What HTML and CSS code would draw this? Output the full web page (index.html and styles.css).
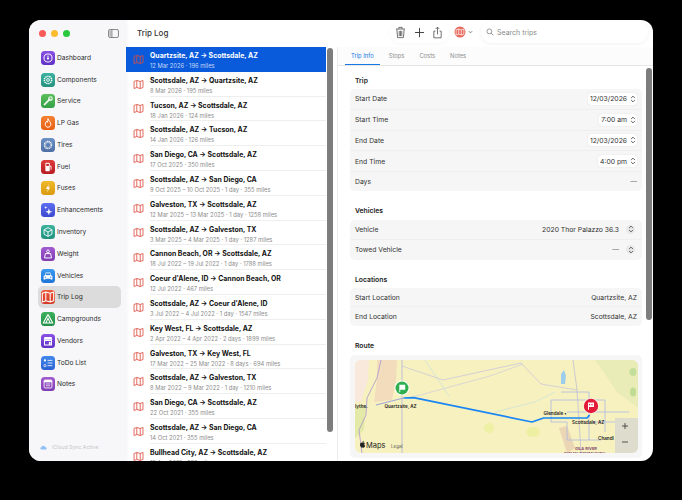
FILE: index.html
```html
<!DOCTYPE html>
<html lang="en">
<head>
    <meta charset="UTF-8">
    <title>Trip Log</title>
    <link rel="stylesheet" href="styles.css">
</head>
<body>
    <svg class="sprites" width="0" height="0">
        <symbol id="map" viewBox="0 0 16 16">
            <path d="M1.5 3.6 5.5 2.2 10.5 3.6 14.5 2.2V12.4L10.5 13.8 5.5 12.4 1.5 13.8Z M5.5 2.2V12.4 M10.5 3.6V13.8" fill="none" stroke="currentColor" stroke-width="1.2" stroke-linejoin="round"/>
        </symbol>
        <symbol id="updown" viewBox="0 0 8 12">
            <path d="M1.5 4.2 4 1.7 6.5 4.2 M1.5 7.8 4 10.3 6.5 7.8" fill="none" stroke="currentColor" stroke-width="1.1" stroke-linecap="round" stroke-linejoin="round"/>
        </symbol>
    </svg>

    <div class="window">
        <!-- sidebar -->
        <div class="sidebar">
            <div class="lights">
                <span class="light red"></span>
                <span class="light yellow"></span>
                <span class="light green"></span>
                <svg class="panel-icon" viewBox="0 0 12 10"><rect x="0.5" y="0.5" width="11" height="9" rx="1.8" fill="none" stroke="#555" stroke-width="0.8"/><path d="M4.2 0.5V9.5" stroke="#555" stroke-width="0.8"/><rect x="1.3" y="1.5" width="2" height="7" fill="#bbb"/></svg>
            </div>
            <ul class="nav">
                <li><span class="tile t-purple"><svg viewBox="0 0 16 16"><circle cx="8" cy="8" r="4.6" fill="none" stroke="#fff" stroke-width="1.1"/><circle cx="8" cy="8.6" r="1.3" fill="#fff"/><path d="M8 8V5.2" stroke="#fff"/></svg></span>Dashboard</li>
                <li><span class="tile t-teal"><svg viewBox="0 0 16 16"><circle cx="8" cy="8" r="4.2" fill="none" stroke="#fff" stroke-width="1.6" stroke-dasharray="1.6 0.7"/><circle cx="8" cy="8" r="1.6" fill="none" stroke="#fff"/></svg></span>Components</li>
                <li><span class="tile t-green"><svg viewBox="0 0 16 16"><path d="M4 12 10 6" stroke="#fff" stroke-width="2" stroke-linecap="round"/><circle cx="10.8" cy="5.2" r="2" fill="none" stroke="#fff" stroke-width="1.2"/></svg></span>Service</li>
                <li><span class="tile t-orange"><svg viewBox="0 0 16 16"><path d="M8 3C8.5 5.5 11.2 6.8 11.2 9.6 11.2 11.6 9.8 12.8 8 12.8S4.8 11.6 4.8 9.6C4.8 8 5.8 7 6.4 6 6.8 6.6 7 7 7.2 7.2 7.8 6 8 4.5 8 3Z" fill="none" stroke="#fff" stroke-width="1.1"/></svg></span>LP Gas</li>
                <li><span class="tile t-slate"><svg viewBox="0 0 16 16"><circle cx="8" cy="8" r="4.2" fill="none" stroke="#fff" stroke-width="1.2" stroke-dasharray="1.4 0.6"/><circle cx="8" cy="8" r="3" fill="none" stroke="#fff" stroke-width="0.5"/></svg></span>Tires</li>
                <li><span class="tile t-red"><svg viewBox="0 0 16 16"><rect x="5" y="3.2" width="5" height="9.6" rx="0.8" fill="#fff"/><rect x="6" y="4.4" width="3" height="2.4" fill="#c8262b"/><path d="M10 7H11.5V11" fill="none" stroke="#fff"/></svg></span>Fuel</li>
                <li><span class="tile t-yellow"><svg viewBox="0 0 16 16"><path d="M9.5 3 5.5 9H8L6.5 13 10.5 7H8Z" fill="#fff"/></svg></span>Fuses</li>
                <li><span class="tile t-indigo"><svg viewBox="0 0 16 16"><path d="M9 6 10 9 13 10 10 11 9 14 8 11 5 10 8 9Z" fill="#fff"/><path d="M5.5 3 6 4.5 7.5 5 6 5.5 5.5 7 5 5.5 3.5 5 5 4.5Z" fill="#fff"/></svg></span>Enhancements</li>
                <li><span class="tile t-teal"><svg viewBox="0 0 16 16"><path d="M8 3 12.5 5.5V10.5L8 13 3.5 10.5V5.5Z M3.5 5.5 8 8 12.5 5.5 M8 8V13" fill="none" stroke="#fff" stroke-width="1"/></svg></span>Inventory</li>
                <li><span class="tile t-violet"><svg viewBox="0 0 16 16"><path d="M4 12.5H12L11 7.5H5Z" fill="none" stroke="#fff" stroke-width="1.1"/><circle cx="8" cy="5" r="1.6" fill="none" stroke="#fff"/></svg></span>Weight</li>
                <li><span class="tile t-blue"><svg viewBox="0 0 16 16"><path d="M4.5 7 5.5 4H10.5L11.5 7 13 8V12H11V11H5V12H3V8Z" fill="#fff"/><rect x="5.6" y="5" width="4.8" height="2" fill="#2a83e0"/><circle cx="5" cy="9.3" r="0.8" fill="#2a83e0"/><circle cx="11" cy="9.3" r="0.8" fill="#2a83e0"/></svg></span>Vehicles</li>
                <li class="active"><span class="tile t-tomato"><svg viewBox="0 0 16 16"><use href="#map" color="#fff"/></svg></span>Trip Log</li>
                <li><span class="tile t-forest"><svg viewBox="0 0 16 16"><path d="M8 3 13.5 12.5H2.5Z M8 7 10.5 12.5H5.5Z" fill="none" stroke="#fff" stroke-width="1.2" stroke-linejoin="round"/></svg></span>Campgrounds</li>
                <li><span class="tile t-purple"><svg viewBox="0 0 16 16"><path d="M4 3.5H12L13 6.5H3Z" fill="#fff"/><path d="M4 7.5H12V12.5H4Z" fill="none" stroke="#fff" stroke-width="1.2"/><rect x="9" y="9" width="2" height="3.5" fill="#fff"/></svg></span>Vendors</li>
                <li><span class="tile t-azure"><svg viewBox="0 0 16 16"><circle cx="4.5" cy="5" r="1.3" fill="#fff"/><circle cx="4.5" cy="11" r="1.3" fill="none" stroke="#fff" stroke-width="0.8"/><path d="M7.5 5H13 M7.5 11H13 M7.5 8H13" stroke="#fff" stroke-width="0.9"/></svg></span>ToDo List</li>
                <li><span class="tile t-violet"><svg viewBox="0 0 16 16"><rect x="3.5" y="3.5" width="9" height="9" rx="1.2" fill="none" stroke="#fff"/><rect x="3.5" y="3.5" width="9" height="2.6" fill="#fff"/><path d="M5.5 8H10.5 M5.5 10H10.5" stroke="#fff" stroke-width="0.8"/></svg></span>Notes</li>
            </ul>
            <div class="sync">
                <svg viewBox="0 0 16 10"><path d="M4 9.5C2 9.5 0.8 8.2 0.8 6.7 0.8 5.2 2 4.2 3.4 4.2 4 2 5.8 0.8 7.8 0.8 10.2 0.8 12 2.6 12.2 4.6 14 4.6 15.2 5.6 15.2 7 15.2 8.5 14 9.5 12.5 9.5Z" fill="#8fc1f5"/></svg>
                <span>iCloud Sync Active</span>
            </div>
        </div>

        <!-- trip list -->
        <div class="list-col">
            <div class="list-head">Trip Log</div>
            <div class="trips">
                <a class="trip selected"><svg class="trip-icon"><use href="#map"/></svg><div class="bd"><p class="label">Quartzsite, AZ → Scottsdale, AZ</p><p class="sub">12 Mar 2026 · 196 miles</p></div></a>
                <a class="trip"><svg class="trip-icon"><use href="#map"/></svg><div class="bd"><p class="label">Scottsdale, AZ → Quartzsite, AZ</p><p class="sub">8 Mar 2026 · 195 miles</p></div></a>
                <a class="trip"><svg class="trip-icon"><use href="#map"/></svg><div class="bd"><p class="label">Tucson, AZ → Scottsdale, AZ</p><p class="sub">18 Jan 2026 · 124 miles</p></div></a>
                <a class="trip"><svg class="trip-icon"><use href="#map"/></svg><div class="bd"><p class="label">Scottsdale, AZ → Tucson, AZ</p><p class="sub">14 Jan 2026 · 126 miles</p></div></a>
                <a class="trip"><svg class="trip-icon"><use href="#map"/></svg><div class="bd"><p class="label">San Diego, CA → Scottsdale, AZ</p><p class="sub">17 Oct 2025 · 350 miles</p></div></a>
                <a class="trip"><svg class="trip-icon"><use href="#map"/></svg><div class="bd"><p class="label">Scottsdale, AZ → San Diego, CA</p><p class="sub">9 Oct 2025 – 10 Oct 2025 · 1 day · 355 miles</p></div></a>
                <a class="trip"><svg class="trip-icon"><use href="#map"/></svg><div class="bd"><p class="label">Galveston, TX → Scottsdale, AZ</p><p class="sub">12 Mar 2025 – 13 Mar 2025 · 1 day · 1258 miles</p></div></a>
                <a class="trip"><svg class="trip-icon"><use href="#map"/></svg><div class="bd"><p class="label">Scottsdale, AZ → Galveston, TX</p><p class="sub">3 Mar 2025 – 4 Mar 2025 · 1 day · 1287 miles</p></div></a>
                <a class="trip"><svg class="trip-icon"><use href="#map"/></svg><div class="bd"><p class="label">Cannon Beach, OR → Scottsdale, AZ</p><p class="sub">18 Jul 2022 – 19 Jul 2022 · 1 day · 1788 miles</p></div></a>
                <a class="trip"><svg class="trip-icon"><use href="#map"/></svg><div class="bd"><p class="label">Coeur d'Alene, ID → Cannon Beach, OR</p><p class="sub">12 Jul 2022 · 467 miles</p></div></a>
                <a class="trip"><svg class="trip-icon"><use href="#map"/></svg><div class="bd"><p class="label">Scottsdale, AZ → Coeur d'Alene, ID</p><p class="sub">3 Jul 2022 – 4 Jul 2022 · 1 day · 1547 miles</p></div></a>
                <a class="trip"><svg class="trip-icon"><use href="#map"/></svg><div class="bd"><p class="label">Key West, FL → Scottsdale, AZ</p><p class="sub">2 Apr 2022 – 4 Apr 2022 · 2 days · 1899 miles</p></div></a>
                <a class="trip"><svg class="trip-icon"><use href="#map"/></svg><div class="bd"><p class="label">Galveston, TX → Key West, FL</p><p class="sub">17 Mar 2022 – 25 Mar 2022 · 8 days · 694 miles</p></div></a>
                <a class="trip"><svg class="trip-icon"><use href="#map"/></svg><div class="bd"><p class="label">Scottsdale, AZ → Galveston, TX</p><p class="sub">8 Mar 2022 – 9 Mar 2022 · 1 day · 1210 miles</p></div></a>
                <a class="trip"><svg class="trip-icon"><use href="#map"/></svg><div class="bd"><p class="label">San Diego, CA → Scottsdale, AZ</p><p class="sub">22 Oct 2021 · 355 miles</p></div></a>
                <a class="trip"><svg class="trip-icon"><use href="#map"/></svg><div class="bd"><p class="label">Scottsdale, AZ → San Diego, CA</p><p class="sub">14 Oct 2021 · 355 miles</p></div></a>
                <a class="trip"><svg class="trip-icon"><use href="#map"/></svg><div class="bd"><p class="label">Bullhead City, AZ → Scottsdale, AZ</p><p class="sub">15 Apr 2021 · 322 miles</p></div></a>
            </div>
            <div class="scrollbar list-thumb"></div>
        </div>

        <!-- detail -->
        <div class="detail-col">
            <div class="toolbar">
                <div class="tool-group">
                    <svg viewBox="0 0 12 14"><path d="M2 3.5 2.8 12.6H9.2L10 3.5 M1 3.2H11 M4.2 3V1.4H7.8V3 M4.6 5.2V11 M6 5.2V11 M7.4 5.2V11" fill="none" stroke="#555" stroke-width="0.9"/></svg>
                    <svg viewBox="0 0 12 14"><path d="M6 2.5V11.5 M1.5 7H10.5" stroke="#444" stroke-width="1.1" stroke-linecap="round"/></svg>
                    <svg viewBox="0 0 12 14"><path d="M3.8 5.5H2V12.8H10V5.5H8.2 M6 9V1.2 M4 3.2 6 1.2 8 3.2" fill="none" stroke="#555" stroke-width="0.9"/></svg>
                </div>
                <div class="tool-menu">
                    <svg class="menu-icon" viewBox="0 0 14 14"><circle cx="7" cy="7" r="6.4" fill="#e8685c"/><path d="M2.5 4.5 5.5 3.5 8.5 4.5 11.5 3.5V9.5L8.5 10.5 5.5 9.5 2.5 10.5Z M5.5 3.5V9.5 M8.5 4.5V10.5" fill="none" stroke="#fff" stroke-width="0.8"/></svg>
                    <svg class="menu-chevron" viewBox="0 0 6 4"><path d="M1 1 3 3 5 1" fill="none" stroke="#555" stroke-width="0.9"/></svg>
                </div>
                <div class="search">
                    <svg viewBox="0 0 10 10"><circle cx="4.2" cy="4.2" r="3" fill="none" stroke="#777" stroke-width="0.9"/><path d="M6.5 6.5 9 9" stroke="#777" stroke-width="1"/></svg>
                    <span>Search trips</span>
                </div>
            </div>
            <div class="tabs">
                <span class="tab current">Trip Info</span>
                <span class="tab">Stops</span>
                <span class="tab">Costs</span>
                <span class="tab">Notes</span>
            </div>
            <div class="detail">
                <h3>Trip</h3>
                <div class="card">
                    <div class="row"><span>Start Date</span><span class="picker">12/03/2026<svg><use href="#updown"/></svg></span></div>
                    <div class="row"><span>Start Time</span><span class="picker">7:00 am<svg><use href="#updown"/></svg></span></div>
                    <div class="row"><span>End Date</span><span class="picker">12/03/2026<svg><use href="#updown"/></svg></span></div>
                    <div class="row"><span>End Time</span><span class="picker">4:00 pm<svg><use href="#updown"/></svg></span></div>
                    <div class="row days"><span>Days</span><span class="muted">—</span></div>
                </div>
                <h3>Vehicles</h3>
                <div class="card">
                    <div class="row vehicle"><span>Vehicle</span><span class="select">2020 Thor Palazzo 36.3<i class="knob"><svg><use href="#updown"/></svg></i></span></div>
                    <div class="row vehicle"><span>Towed Vehicle</span><span class="select muted">—<i class="knob"><svg><use href="#updown"/></svg></i></span></div>
                </div>
                <h3>Locations</h3>
                <div class="card">
                    <div class="row short"><span>Start Location</span><span>Quartzsite, AZ</span></div>
                    <div class="row short"><span>End Location</span><span>Scottsdale, AZ</span></div>
                </div>
                <h3>Route</h3>
                <div class="card route-card">
                    <svg class="map" viewBox="0 0 283 93">
                        <rect width="283" height="93" fill="#f7f0bf"/>
                        <path d="M22 0H42L41 20 37 40 19 42 22 20Z" fill="#f2dcbc"/>
                        <path d="M0 0H14L13 20 6 42H0Z" fill="#f9e8dc"/>
                        <path d="M0 46H11L9 70 0 78Z" fill="#e3e9a6"/>
                        <path d="M240 0H283V48L262 32 250 14Z" fill="#eaecb8"/>
                        <ellipse cx="278" cy="12" rx="3.5" ry="4" fill="#c4de9c"/>
                        <ellipse cx="278" cy="32" rx="3" ry="4.5" fill="#bfdb94"/>
                        <ellipse cx="134" cy="68" rx="5" ry="5" fill="#eef0a4"/>
                        <ellipse cx="178" cy="72" rx="7" ry="5" fill="#edf0a2"/>
                        <path d="M204 68 212 66 220 88 212 93Z" fill="#ead6b4"/>
                        <path d="M206 14 209 10 211 16 210 24 206 24Z" fill="#9ccdeb"/>
                        <path d="M26 0 22 18 12 38 11 55 4 70 7 93" fill="none" stroke="#a995d2" stroke-width="0.8"/>
                        <path d="M47 0V93" stroke="#c7c8d4" stroke-width="1.2"/>
                        <path d="M47 6 88 20 166 3 186 24 222 30" fill="none" stroke="#c4c3de" stroke-width="0.7"/>
                        <path d="M58 37 135 16 168 4" fill="none" stroke="#c8c7e0" stroke-width="0.6"/>
                        <path d="M70 0 94 36 M140 52 180 42 200 32" fill="none" stroke="#bfe0e2" stroke-width="0.6"/>
                        <path d="M218 0 222 30 226 93" fill="none" stroke="#b9b9d8" stroke-width="0.7"/>
                        <path d="M196 40 V62 H212 V80 H246 M196 40 H250 V72 M206 32 H234 V80 M212 52 H274 M238 62 H262" fill="none" stroke="#adb8e4" stroke-width="0.8"/>
                        <path d="M21 45 48.6 38" fill="none" stroke="#a0a9d8" stroke-width="1.1"/>
                        <path d="M48.6 38 58.6 37.7 177 62 188.6 58 232 58 234.6 55" fill="none" stroke="#1a86f4" stroke-width="1.7" stroke-linejoin="round"/>
                        <circle cx="47" cy="28" r="7.6" fill="#fff" fill-opacity="0.9"/>
                        <circle cx="47" cy="28" r="6.5" fill="#2eb050"/>
                        <path d="M44.3 24.8H50.2V29.8H45.2V32.2H44.3Z" fill="#fff"/>
                        <circle cx="236" cy="46" r="8" fill="#fff" fill-opacity="0.6"/>
                        <circle cx="236" cy="46" r="7.2" fill="#e31b39"/>
                        <path d="M233 42.5H239V47H234V49.8H233Z" fill="#fff"/>
                        <path d="M234 44H235.2V45.2H234Z M236.4 44H237.6V45.2H236.4Z" fill="#e31b39"/>
                        <text class="map-label" x="0" y="48">lythe.</text>
                        <text class="map-label" x="29.5" y="48">Quartzsite, AZ</text>
                        <text class="map-label" x="188.5" y="55">Glendale •</text>
                        <text class="map-label" x="217" y="64">Scottsdale, AZ</text>
                        <text class="map-label" x="243" y="80">Chandl</text>
                        <path d="M7.5 82.6C8.2 82.2 9.6 82.5 10 83.2 9 83.8 9.1 85.3 10.2 85.7 9.9 86.6 9.2 87.8 8.4 87.7 7.9 87.6 7.5 87.4 7.1 87.7 6.2 88 5 86.2 5 84.8 5 83 6.4 82.1 7.5 82.6Z M7.5 82.2C7.5 81.4 8.1 80.8 8.8 80.7 8.9 81.5 8.3 82.2 7.5 82.2Z" fill="#222"/>
                        <text class="map-maps" x="11" y="88">Maps</text>
                        <text class="map-legal" x="36" y="88">Legal</text>
                        <text class="map-reserve" x="220" y="89.5">GILA RIVER</text>
                        <text class="map-reserve" x="209" y="94.5">INDIAN COMMUNITY</text>
                        <rect x="260" y="58" width="23" height="35" fill="#d9d9cf" fill-opacity="0.85"/>
                        <path d="M267 66H273 M270 63V69 M267 82H273" stroke="#444" stroke-width="0.9"/>
                    </svg>
                </div>
            </div>
            <div class="scrollbar detail-thumb"></div>
        </div>
    </div>
</body>
</html>
```

FILE: styles.css
```css
* {
    padding: 0;
    margin: 0;
    box-sizing: border-box;
}
body {
    background: #000;
    padding: 20px 0 0 29px;
    font-family: "Inter", "Liberation Sans", sans-serif;
    color: #222;
    overflow: hidden;
}
.sprites {
    position: absolute;
}
.window {
    width: 624px;
    height: 441px;
    background: #fff;
    border-radius: 12px;
    display: flex;
    overflow: hidden;
}

/* sidebar */
.sidebar {
    width: 97px;
    background: #f7f7fa;
    display: flex;
    flex-direction: column;
    padding: 0 5px 0 9px;
    box-shadow: 1px 0 3px rgba(0, 0, 0, 0.05);
}
.lights {
    height: 27px;
    display: flex;
    align-items: center;
    gap: 5px;
    padding: 0 0 0 1px;
}
.light {
    width: 7px;
    height: 7px;
    border-radius: 50%;
}
.red { background: #fb5a58; }
.yellow { background: #fdbc2e; }
.green { background: #29c83f; }
.panel-icon {
    width: 11px;
    height: 9px;
    margin-left: 33px;
}
.nav {
    list-style: none;
}
.nav li {
    height: 21.78px;
    display: flex;
    align-items: center;
    gap: 2px;
    font-size: 6.6px;
    color: #2a2a2a;
    padding-left: 3px;
    border-radius: 5px;
}
.nav li.active {
    background: #dcdcdc;
}
.tile {
    width: 14px;
    height: 14px;
    border-radius: 3.5px;
    flex-shrink: 0;
}
.tile svg {
    display: block;
    width: 14px;
    height: 14px;
}
.t-purple { background: linear-gradient(#8a52e6, #5e31c4); }
.t-teal { background: linear-gradient(#3bb39f, #23927f); }
.t-green { background: linear-gradient(#5cbf5c, #35a047); }
.t-orange { background: linear-gradient(#f58233, #e85f14); }
.t-slate { background: linear-gradient(#6d92c6, #4d6fa4); }
.t-red { background: linear-gradient(#de3b3b, #b81c22); }
.t-yellow { background: linear-gradient(#f0b92a, #da9a10); }
.t-indigo { background: linear-gradient(#5e6ef0, #3c48d0); }
.t-violet { background: linear-gradient(#a15ad0, #7f3cb2); }
.t-blue { background: linear-gradient(#3c9bf0, #1f74d8); }
.t-tomato { background: linear-gradient(#ee5a3c, #d43a26); }
.t-forest { background: linear-gradient(#3eb05c, #1f8f47); }
.t-azure { background: linear-gradient(#4388ee, #2a62d0); }
.sync {
    margin-top: auto;
    height: 28px;
    display: flex;
    align-items: center;
    gap: 5px;
    padding-left: 2px;
    font-size: 5.2px;
    color: #c6c6c8;
}
.sync svg {
    width: 7px;
    height: 5px;
}

/* list */
.list-col {
    position: relative;
    width: 211px;
    display: flex;
    flex-direction: column;
}
.list-head {
    height: 27px;
    line-height: 27px;
    padding-left: 11px;
    font-size: 8px;
    font-weight: 500;
    color: #333;
}
.trips {
    flex: 1;
    overflow: hidden;
    width: 200px;
}
.trip {
    display: flex;
    align-items: center;
    height: 24.8px;
    color: #111;
}
.trip-icon {
    width: 11px;
    height: 11px;
    margin: 0 6.5px;
    color: #dc4b3e;
    flex-shrink: 0;
}
.trip .bd {
    flex: 1;
    height: 100%;
    border-bottom: 1px solid #eee;
    padding-top: 4px;
}
.label {
    font-size: 6.9px;
    font-weight: 700;
    line-height: 9px;
    white-space: nowrap;
}
.sub {
    font-size: 5.8px;
    color: #8c8c8c;
    line-height: 9px;
    margin-top: 1px;
    white-space: nowrap;
}
.trip.selected {
    background: #0a5bdc;
    color: #fff;
}
.trip.selected .bd {
    border-bottom: 0;
}
.trip.selected .sub {
    color: #c6d8f6;
}
.scrollbar {
    position: absolute;
    width: 6px;
    background: #7d7d7d;
    border-radius: 3px;
}
.list-thumb {
    left: 201px;
    top: 28px;
    height: 384px;
}

/* detail */
.detail-col {
    position: relative;
    flex: 1;
    display: flex;
    flex-direction: column;
    min-width: 0;
}
.toolbar {
    height: 27px;
    display: flex;
    align-items: center;
    justify-content: flex-end;
    padding: 0 5px 3px 0;
}
.tool-group {
    display: flex;
    align-items: center;
    gap: 7.5px;
    height: 22px;
    padding: 0 6px 0 5px;
    border-radius: 11px;
    box-shadow: 0 1px 4px rgba(0, 0, 0, 0.04);
}
.tool-group svg {
    width: 11px;
    height: 13px;
}
.tool-menu {
    display: flex;
    align-items: center;
    gap: 2px;
    height: 22px;
    padding: 0 8px 0 5px;
    border-radius: 11px;
}
.menu-icon {
    width: 12px;
    height: 12px;
}
.menu-chevron {
    width: 5px;
    height: 4px;
}
.search {
    width: 167px;
    height: 22px;
    border-radius: 11px;
    background: #fff;
    box-shadow: 0 1px 4px rgba(0, 0, 0, 0.06);
    display: flex;
    align-items: center;
    gap: 3px;
    padding-left: 5px;
    font-size: 7px;
    color: #8a8a8a;
}
.search svg {
    width: 8px;
    height: 8px;
}
.tabs {
    height: 19px;
    display: flex;
    align-items: center;
    gap: 15px;
    padding: 0 0 1px 13px;
    border-left: 1px solid #ececec;
    border-bottom: 1px solid #e6e6e6;
    font-size: 5.8px;
    color: #8d8d8d;
    background: #fcfcfc;
}
.tab.current {
    color: #1677e6;
    position: relative;
}
.tab.current::after {
    content: "";
    position: absolute;
    left: -6px;
    right: -6px;
    bottom: -6px;
    height: 1.5px;
    background: #1677e6;
}
.detail {
    flex: 1;
    overflow: hidden;
    padding: 9.5px 11px 0 12px;
    border-left: 1px solid #ececec;
    font-size: 6.8px;
    color: #333;
}
.detail h3 {
    font-size: 6.8px;
    font-weight: 600;
    line-height: 9px;
    padding: 0 0 4.5px 5px;
    color: #222;
}
.card {
    background: #f6f6f6;
    border-radius: 5px;
    margin-bottom: 15px;
}
.row {
    height: 20.75px;
    display: flex;
    justify-content: space-between;
    align-items: center;
    padding: 0 5px;
    border-bottom: 1px solid #efefef;
}
.row:last-child {
    border-bottom: 0;
}
.row.days {
    height: 19px;
}
.row.vehicle {
    height: 20px;
}
.row.short {
    height: 19px;
}
.picker {
    display: flex;
    align-items: center;
    gap: 3px;
    background: #fff;
    padding: 0 1px 0 2px;
    height: 12px;
    border-radius: 3px;
    box-shadow: 0 0 1px rgba(0, 0, 0, 0.2);
}
.picker svg,
.knob svg {
    width: 6px;
    height: 8px;
    color: #333;
}
.muted {
    color: #777;
}
.select {
    display: flex;
    align-items: center;
    gap: 7px;
    padding-right: 2px;
}
.knob {
    width: 9px;
    height: 9px;
    border-radius: 50%;
    background: #e8e8e8;
    display: flex;
    align-items: center;
    justify-content: center;
}
.route-card {
    padding: 5px 5px 5px 4.7px;
    margin-bottom: 0;
}
.map {
    display: block;
    width: 283px;
    height: 93px;
    border-radius: 6px;
}
.map-label {
    font-size: 4.6px;
    font-weight: 600;
    fill: #222;
}
.map-maps {
    font-size: 7.5px;
    fill: #222;
}
.map-legal {
    font-size: 4.5px;
    fill: #555;
}
.map-reserve {
    font-size: 4px;
    font-weight: 600;
    fill: #7a3a6a;
}
.detail-thumb {
    right: 1px;
    top: 48px;
    height: 252px;
}
```
